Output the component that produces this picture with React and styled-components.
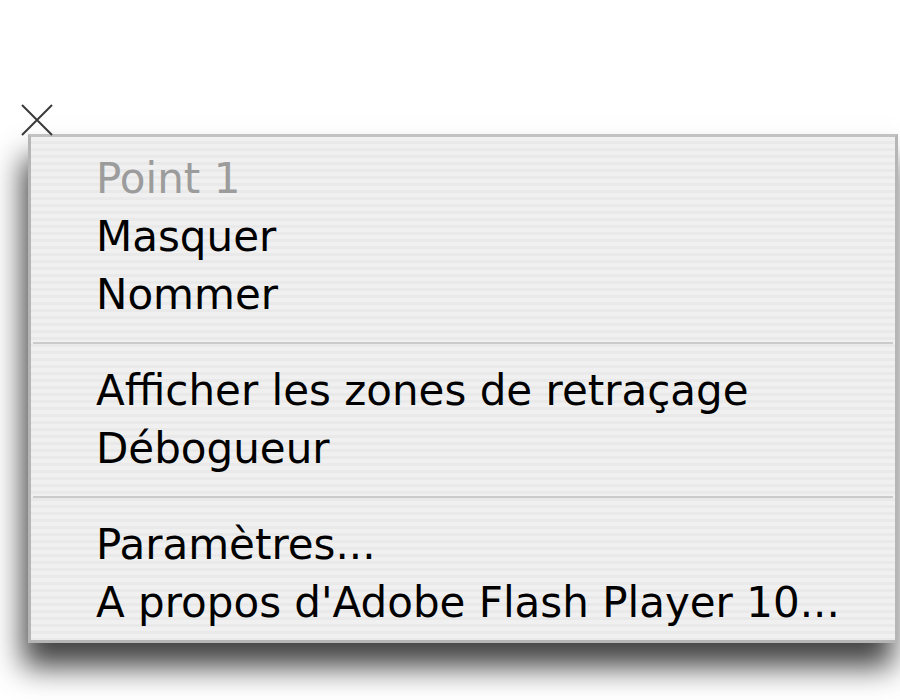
import React from 'react';
import styled, { createGlobalStyle } from 'styled-components';

const Global = createGlobalStyle`
  html, body {
    margin: 0;
    padding: 0;
    background: #fff;
  }
  body {
    font-family: "DejaVu Sans", "Liberation Sans", sans-serif;
  }
`;

const Page = styled.div`
  position: relative;
  width: 900px;
  height: 700px;
  overflow: hidden;
  padding: 134px 0 0 28px;
  box-sizing: border-box;
`;

// the mouse pointer lies over the menu corner
const Cursor = styled.svg`
  position: absolute;
  left: 21px;
  top: 104px;
  z-index: 2;
`;

const Menu = styled.div`
  width: 870px;
  box-sizing: border-box;
  border: 3px solid #b6b6b6;
  border-top-color: #c2c2c2;
  padding: 13px 0 8px;
  background: repeating-linear-gradient(
    to bottom,
    #f0f0f0 0px,
    #f0f0f0 4px,
    #e9e9e9 4px,
    #e9e9e9 7px
  );
  box-shadow: -5px 24px 28px rgba(0, 0, 0, 0.74);
`;

const Item = styled.div`
  height: 58px;
  line-height: 58px;
  padding-left: 65px;
  font-size: 42px;
  color: ${(p) => (p.disabled ? '#9c9c9c' : '#000')};
  white-space: nowrap;
`;

const Separator = styled.div`
  height: 38px;
  display: flex;
  align-items: center;
  padding: 0 2px;
  &::after {
    content: '';
    flex: 1;
    height: 2px;
    background: #cbcbcb;
  }
`;

const groups = [
  [{ label: 'Point 1', disabled: true }, { label: 'Masquer' }, { label: 'Nommer' }],
  [{ label: 'Afficher les zones de retraçage' }, { label: 'Débogueur' }],
  [{ label: 'Paramètres...' }, { label: "A propos d'Adobe Flash Player 10..." }],
];

export default function App() {
  return (
    <Page>
      <Global />
      <Cursor width="32" height="32" viewBox="0 0 32 32">
        <path d="M1 1 L31 31 M31 1 L1 31" stroke="#3a3a3a" strokeWidth="2" fill="none" />
      </Cursor>
      <Menu>
        {groups.map((g, i) => (
          <React.Fragment key={i}>
            {i > 0 && <Separator />}
            {g.map((it) => (
              <Item key={it.label} disabled={it.disabled}>
                {it.label}
              </Item>
            ))}
          </React.Fragment>
        ))}
      </Menu>
    </Page>
  );
}
